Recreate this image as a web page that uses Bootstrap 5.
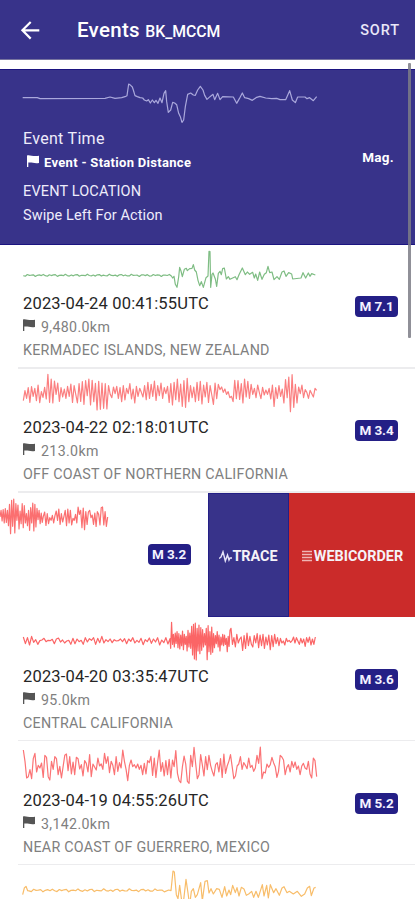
<!DOCTYPE html>
<html lang="en">
<head>
<meta charset="utf-8">
<meta name="viewport" content="width=device-width, initial-scale=1">
<title>Events BK_MCCM</title>
<link href="https://cdn.jsdelivr.net/npm/bootstrap@5.3.0/dist/css/bootstrap.min.css" rel="stylesheet">
<style>
:root{--navy:#38338a}
body{font-family:Roboto,"Liberation Sans",sans-serif;background:#fff;height:900px;overflow:hidden;position:relative}
.topbar{height:60px;background:var(--navy);border-bottom:1px solid #77749f;padding:2px 15px 0 20px}
.topbar svg{margin-top:-1px}
.topbar h1{font-size:20.5px;font-weight:500;margin:0 0 0 37px;letter-spacing:.3px;line-height:24px}
.topbar .station{font-size:15.8px;letter-spacing:-.05px}
.sort-btn{font-size:14.5px;font-weight:500;letter-spacing:.9px;line-height:20px;color:#e9e7f8}
.intro{height:175.5px;margin-top:9px;background:var(--navy);border-top:1px solid #1b1480;border-bottom:1px solid #1b1480;color:#eeecfb}
.intro-time{font-size:16px;line-height:25px;margin-top:1px;letter-spacing:.3px}
.intro-dist{font-size:13px;font-weight:700;line-height:24px;color:#fff;gap:5px;padding-left:4px;letter-spacing:.3px}
.intro-dist svg{margin-top:-4px}
.intro-loc{font-size:14.5px;line-height:24px;margin-top:5px;letter-spacing:.15px}
.intro-tip{font-size:14.5px;line-height:24px;letter-spacing:.1px}
.intro-mag{font-size:13.5px;font-weight:700;color:#fff;padding-bottom:39px;margin-right:1px;letter-spacing:.3px}
.trace{display:block;width:415px;height:45px;fill:none;stroke-width:3.6;stroke-linejoin:round;flex:none}
.event{height:124.2px;overflow:hidden}
.event.peek{height:34px}
.event .trace{margin-bottom:2.6px}
.rule-line{height:1.5px;background:#ececee;margin-left:18px}
.info{padding:0 17px 0 23px}
.intro .info{padding-right:20px}
.when{font-size:16.5px;line-height:24px;color:#262626;letter-spacing:.17px}
.dist{font-size:14.2px;line-height:22px;color:#808080;gap:6px;letter-spacing:.35px}
.place{font-size:14.3px;line-height:24px;color:#808080;letter-spacing:.25px}
.mag{font-size:13.5px;font-weight:700;line-height:21px;width:43px;height:21px;border-radius:4px;background:#241f86;color:#f4f2ff;text-align:center;flex:none;letter-spacing:-.1px}
.swiped{padding-right:17.5px}
.act{font-size:14.4px;font-weight:700;color:#f5f2f8;padding-top:3px}
.act-trace{width:81px;background:var(--navy);border:1px solid #241f86}
.act-web{width:126px;background:#cb2b2a}
.thumb{position:absolute;left:408px;top:63px;width:3px;height:275px;background:#7c7c86;opacity:.85;border-radius:1px}
</style>
<script src="https://cdn.jsdelivr.net/npm/bootstrap@5.3.0/dist/js/bootstrap.bundle.min.js"></script>
</head>
<body>
<svg class="d-none"><symbol id="flag" viewBox="0 0 12 12"><path d="M0 0.4C3-.5 5 1.6 12 .8V8C7 8.8 5 7 1.3 7.6V12H0Z"/></symbol></svg>

<header class="topbar d-flex align-items-center text-white">
  <svg width="20" height="20" viewBox="0 0 20 20" fill="none" stroke="#fff" stroke-width="2.2"><path d="M19.3 10.3H2.5M10.7 2L2.4 10.3L10.7 18.6"/></svg>
  <h1>Events <span class="station">BK_MCCM</span></h1>
  <span class="sort-btn ms-auto">SORT</span>
</header>

<section class="intro d-flex flex-column">
  <svg class="trace" viewBox="0 210 1245 165" id="t0" style="height:55px" stroke="#aaa8dc"></svg>
  <div class="info d-flex align-items-center">
    <div class="flex-grow-1">
      <div class="intro-time">Event Time</div>
      <div class="intro-dist d-flex align-items-center"><svg width="12" height="12" fill="#fff"><use href="#flag"/></svg>Event - Station Distance</div>
      <div class="intro-loc">EVENT LOCATION</div>
      <div class="intro-tip">Swipe Left For Action</div>
    </div>
    <div class="intro-mag">Mag.</div>
  </div>
</section>

<main>
  <article class="event d-flex flex-column">
    <svg class="trace" viewBox="0 -3 1245 135" id="t1" stroke="#7fbd84"></svg>
    <div class="info d-flex justify-content-between flex-grow-1">
      <div>
        <div class="when">2023-04-24 00:41:55UTC</div>
        <div class="dist d-flex align-items-center"><svg width="12" height="12" class="mb-1" fill="#555"><use href="#flag"/></svg>9,480.0km</div>
        <div class="place">KERMADEC ISLANDS, NEW ZEALAND</div>
      </div>
      <div class="mag mt-1">M 7.1</div>
    </div>
    <div class="rule-line"></div>
  </article>

  <article class="event d-flex flex-column">
    <svg class="trace" viewBox="0 10 1245 135" id="t2" stroke="#fb7f80"></svg>
    <div class="info d-flex justify-content-between flex-grow-1">
      <div>
        <div class="when">2023-04-22 02:18:01UTC</div>
        <div class="dist d-flex align-items-center"><svg width="12" height="12" class="mb-1" fill="#555"><use href="#flag"/></svg>213.0km</div>
        <div class="place">OFF COAST OF NORTHERN CALIFORNIA</div>
      </div>
      <div class="mag mt-1">M 3.4</div>
    </div>
    <div class="rule-line"></div>
  </article>

  <article class="event d-flex">
    <div class="flex-grow-1 overflow-hidden">
      <svg class="trace" viewBox="0 8 1245 135" id="t3" stroke="#fb6f70"></svg>
      <div class="swiped d-flex justify-content-end"><div class="mag mt-1">M 3.2</div></div>
    </div>
    <div class="act act-trace d-flex align-items-center justify-content-center flex-shrink-0">
      <svg width="13" height="13" viewBox="0 0 13 13" fill="none" stroke="#e6e4f8" stroke-width="1.4"><path d="M0 8.5L2 7L4 1.8L6.3 11L8.5 5L10 10L11 8H13"/></svg>TRACE
    </div>
    <div class="act act-web d-flex align-items-center justify-content-center flex-shrink-0">
      <svg width="13" height="12" viewBox="0 0 13 12" stroke="#efb5b4" stroke-width="1.4"><path d="M1 1.5H11M1 4.5H11M1 7.5H11M1 10.5H11"/></svg>WEBICORDER
    </div>
  </article>

  <article class="event d-flex flex-column">
    <svg class="trace" viewBox="0 6 1245 135" id="t4" stroke="#fb6566"></svg>
    <div class="info d-flex justify-content-between flex-grow-1">
      <div>
        <div class="when">2023-04-20 03:35:47UTC</div>
        <div class="dist d-flex align-items-center"><svg width="12" height="12" class="mb-1" fill="#555"><use href="#flag"/></svg>95.0km</div>
        <div class="place">CENTRAL CALIFORNIA</div>
      </div>
      <div class="mag mt-1">M 3.6</div>
    </div>
    <div class="rule-line"></div>
  </article>

  <article class="event d-flex flex-column">
    <svg class="trace" viewBox="0 19 1245 135" id="t5" stroke="#fb7375"></svg>
    <div class="info d-flex justify-content-between flex-grow-1">
      <div>
        <div class="when">2023-04-19 04:55:26UTC</div>
        <div class="dist d-flex align-items-center"><svg width="12" height="12" class="mb-1" fill="#555"><use href="#flag"/></svg>3,142.0km</div>
        <div class="place">NEAR COAST OF GUERRERO, MEXICO</div>
      </div>
      <div class="mag mt-1">M 5.2</div>
    </div>
    <div class="rule-line"></div>
  </article>

  <article class="event peek">
    <svg class="trace mb-0" viewBox="0 391 1245 102" style="height:34px" id="t6" stroke="#f8bd6a"></svg>
  </article>
</main>
<div class="thumb"></div>

<script>
// Irregular samples are x,y pairs; dense stretches are evenly spaced y values.
function even(x0, x1, ys){return ys.map((y,i)=>(x0+(x1-x0)*i/(ys.length-1)).toFixed(1)+','+y).join(' ')}
// Quiet stretch: a small ripple about a base line
function ripple(x0, x1, base, amp, step){const r=[];for(let x=x0,i=0;x<x1;x+=step,i++)r.push(x+','+(base+amp*(Math.sin(i*2.3)+.6*Math.sin(i*1.1+1))).toFixed(1));return r.join(' ')}
function draw(id, ...parts){document.getElementById(id).innerHTML='<polyline points="'+parts.join(' ')+'"/>'}

draw('t0','68,293 112,293 120,296 315,295 330,291 345,295 365,293 375,290 381,287 386,252 392,256 397,261 400,270 405,287 412,290 420,293 428,294 433,300 440,303 445,299 451,309 457,300 463,308 468,301 474,310 480,294 486,308 492,280 497,272 500,305 505,337 512,330 518,307 524,309 530,314 536,340 541,350 546,367 551,360 556,320 563,283 572,279 580,285 586,286 593,270 601,259 609,270 614,286 621,298 630,290 639,283 644,299 653,280 660,299 668,290 700,291 710,310 718,296 727,279 734,293 746,296 757,301 770,292 780,289 797,294 815,296 830,295 840,299 857,299 869,272 877,300 886,308 893,291 915,291 921,296 929,293 940,302 950,290');

draw('t1', ripple(70,515,88,2.2,6), '518,96 522,91 526,115 531,124 536,93 539,64 543,75 547,92 553,70 559,67 562,74 569,68 576,67 580,56 584,72 589,78 594,103 599,119 604,107 610,124 618,95 624,90 627,16 630,17 632,124 636,85 639,81 646,99 650,121 655,82 660,76 664,86 668,68 673,66 679,99 685,92 690,100 698,96 706,92 711,101 717,86 727,66 736,86 742,78 749,85 758,79 763,96 767,84 773,103 779,78 786,100 793,85 799,80 804,61 809,80 816,78 822,101 831,92 838,100 846,78 852,75 858,91 866,80 875,84 878,99 903,96 909,80 917,96 925,81 930,91 935,83 946,87');

draw('t2', even(70,950,[105,75,98,66,110,63,92,68,105,58,111,78,95,65,100,26,110,40,112,46,86,52,107,66,94,70,98,62,92,55,110,60,86,112,54,107,48,116,45,90,40,118,44,108,53,133,47,131,52,128,54,130,60,86,96,64,84,62,98,66,108,60,103,68,84,54,100,70,112,62,92,68,80,94,60,102,50,98,56,92,46,104,60,90,52,98,66,84,62,110,54,118,50,102,40,108,55,122,45,125,38,108,60,96,64,108,50,104,47,115,58,94,50,110,60,88,116,52,99,56,72,64,80,70,86,78,96,92,108,44,99,45,101,54,112,40,94,47,98,56,86,68,96,58,80,99,65,88,73,86,68,100,58,122,66,98,60,92,70,112,42,96,34,138,27,125,56,112,64,84,58,96,72,80,98,74,84,94,68,74]));

draw('t3', even(0,130,[80,60,92,58,98,55,96,60,106,42,130,30,108,26,128,40,90,44,116,62,100,40,112,46,98,70,106,60,120,52,98,38,122,42,110,54,88,60,100,68,96,78]), even(134,323,[65,105,70,100,82,90,75,98,76,62,90,56,102,70,95,78,60,106,56,98,60,104,84,90,72,98,50,72,60,112,53,118,64,102,65,60,82,74,102,68,108,64,72,104,52,50,104,64,108,80]));

draw('t4', even(70,510,[66,86,68,90,64,82,74,88,77,75,70,80,76,77,73,86,72,69,81,75,84,78,76,88,70,86,72,80,76,88,68,81,71,76,68,88,70,83,64,84,74,80,72,83,74,78,77,72,80,71,86,72,79,68,84,76,82,70,89,74,80,69,85,72,81,68,90,75,83,68,87,71]), even(512,690,[100,22,88,58,96,54,85,50,98,56,102,60,92,48,104,58,88,64,108,46,96,54,100,34,120,28,132,24,135,40,108,30,116,38,106,44,96,56,90,40,134,32,110,50,118,36,112,56,98,62,86,50,96,60,108,66,90,58,92,60,88,70,110,64,94,46]), even(693,946,[40,88,68,96,58,84,72,66,106,62,100,54,92,64,88,96,62,84,56,98,60,92,58,100,66,90,60,104,62,95,58,86,68,92,70,84,78,90,70,80,76,82,77,66,84,68,78,88,70,84,72,94,68,82,66,90,72,88,66]));

draw('t5', even(70,950,[46,80,130,126,105,132,72,56,112,92,100,85,128,62,68,126,136,80,104,66,72,120,95,130,96,62,58,108,66,118,82,120,68,72,103,90,124,78,86,112,60,126,88,97,106,70,94,88,104,56,86,66,114,80,92,120,66,110,84,100,46,80,104,138,92,76,96,90,100,88,104,92,120,86,118,78,84,65,122,70,128,84,46,110,84,124,78,120,74,130,76,96,48,116,138,144,96,64,88,140,146,62,96,38,88,132,120,60,90,124,66,105,62,92,110,124,90,84,112,72,128,58,116,94,80,60,95,132,124,94,88,66,104,84,92,102,70,98,92,110,100,62,86,37,132,112,115,88,98,90,68,84,96,128,110,62,67,76,120,98,90,112,80,98,82,104,94,120,94,86,100,104,80,118,130,70,78,126]));

draw('t6','68,480 73,460 78,455 83,468', ripple(87,500,467,3,7), '506,466 513,468 519,409 523,412 529,480 534,492 539,452 545,498 550,505 558,434 564,475 569,512 574,470 580,462 586,488 592,480 602,444 607,498 615,440 622,438 627,475 633,462 640,478 650,462 658,464 666,488 674,456 680,484 687,466 692,480 698,452 706,474 711,459 717,484 724,458 732,463 739,482 746,478 755,470 761,488 768,470 775,488 787,450 792,484 800,452 805,490 811,450 821,474 828,462 838,482 846,460 852,456 861,474 868,470 880,478 892,470 904,485 914,478 922,460 929,455 934,483 942,460 947,458');
</script>
</body>
</html>
